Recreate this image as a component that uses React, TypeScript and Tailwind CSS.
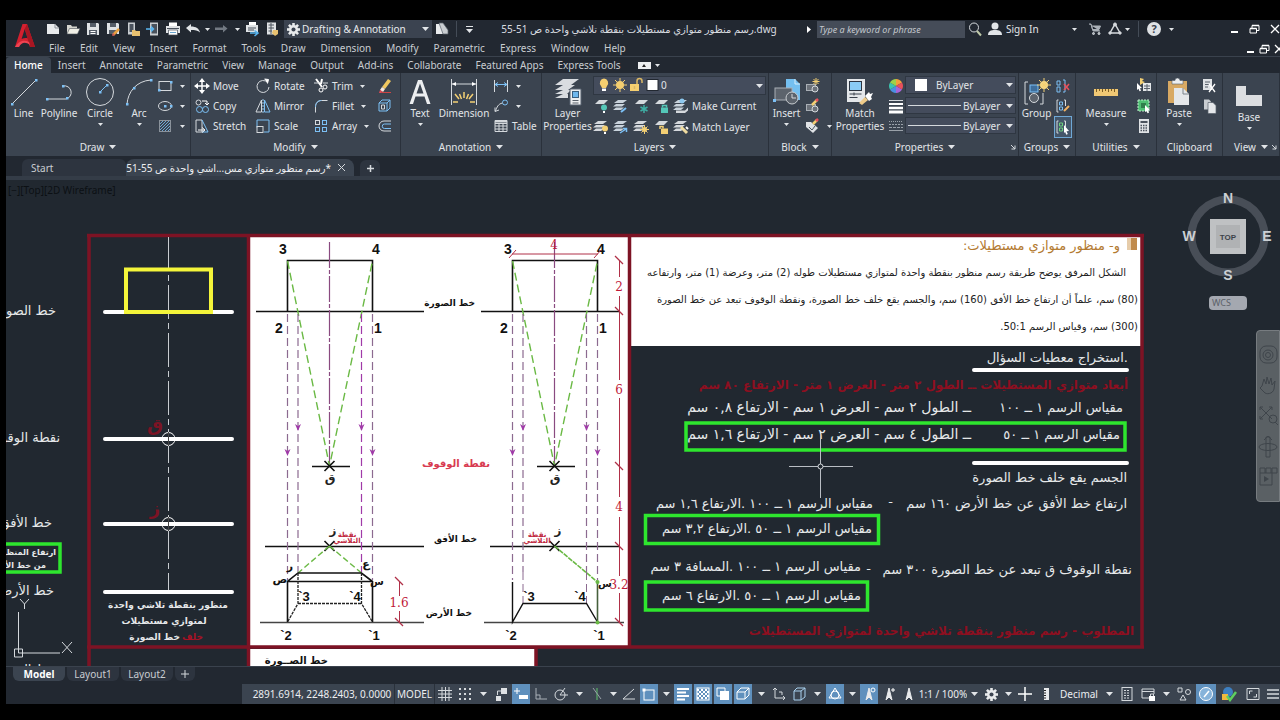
import type { ReactNode } from "react";

const menus = ["File", "Edit", "View", "Insert", "Format", "Tools", "Draw", "Dimension", "Modify", "Parametric", "Express", "Window", "Help"];
const ribbonTabs = ["Home", "Insert", "Annotate", "Parametric", "View", "Manage", "Output", "Add-ins", "Collaborate", "Featured Apps", "Express Tools"];

type IconProps = { w?: number; h?: number; children: ReactNode };

function Ico({ w = 16, h = 16, children }: IconProps) {
  return (
    <svg width={w} height={h} viewBox={`0 0 ${w} ${h}`} fill="none" stroke="#d5d9dd" strokeWidth="1" className="block shrink-0" aria-hidden="true">
      {children}
    </svg>
  );
}

function Caret({ big = false }: { big?: boolean }) {
  return (
    <svg width={big ? 7 : 5} height={big ? 4 : 3} viewBox="0 0 6 3" preserveAspectRatio="none" className="block shrink-0" aria-hidden="true">
      <path d="M0 0h6L3 3z" fill="#e2e5e8" />
    </svg>
  );
}

/* ---------- title bar icons ---------- */

const logo = (
  <svg width="22" height="26" viewBox="0 0 22 26" aria-hidden="true">
    <path d="M1 24 8.500 1h4.500L21 24h-5l-1.500-4.500c-3-1-6-.5-8.500 1L5 24z" fill="#d3202f" />
    <path d="M10.700 6 7.600 16c2-1 4-1.200 6.200-.7z" fill="#222831" />
    <path d="M13 1l8 23h-5L10.700 6z" fill="#a81622" />
    <path d="M1 24c3-5 8-8 14-5l1 3C11 18 7 20 5 24z" fill="#ef4351" />
  </svg>
);

const qatIcons: { name: string; icon: ReactNode }[] = [
  { name: "New", icon: <Ico><path d="M2 3h8l4 4v6H2z" fill="#e8eaec" stroke="none" /><path d="M10 3v4h4" stroke="#8b9198" /></Ico> },
  { name: "Open", icon: <Ico><path d="M2 13V4h4l1 1.500h5V8" fill="#d5d5cf" stroke="none" /><path d="M4.500 7.500H15L12.500 13H2z" fill="#f0efe6" stroke="#4b525b" strokeWidth=".6" /></Ico> },
  { name: "Save", icon: <Ico><path d="M2 2h11l1 1v11H2z" fill="#dfe2e5" stroke="none" /><path d="M5 2h6v4H5zM4 9h8v5H4z" fill="#555d68" stroke="none" /><path d="M5.500 10.500h5M5.500 12.500h5" stroke="#fff" /></Ico> },
  { name: "Save As", icon: <Ico><path d="M2 2h11l1 1v10H2z" fill="#dfe2e5" stroke="none" /><path d="M5 2h6v4H5zM4 9h8v4H4z" fill="#555d68" stroke="none" /><path d="M8 14l6-6" stroke="#e8a040" strokeWidth="2.500" /><path d="M7 15l1-3 2 2z" fill="#d0505a" stroke="none" /></Ico> },
  { name: "Open from mobile", icon: <Ico><path d="M3 1.500h7v12H3z" fill="#c9cdd1" stroke="none" /><path d="M4.500 3h4v8h-4z" fill="#4a525d" stroke="none" /><path d="M7 9h3l1 1h4v5H7z" fill="#e8c170" stroke="none" /></Ico> },
  { name: "Save to mobile", icon: <Ico><path d="M5 1.500h8v13H5z" fill="#c9cdd1" stroke="none" /><path d="M6.500 3H12v9.500H6.500z" fill="#4a525d" stroke="none" /><path d="M1 8h7M6 5.500 8.500 8 6 10.500" stroke="#5ab6f0" strokeWidth="1.500" /></Ico> },
  { name: "Plot", icon: <Ico><path d="M4 1.500h8V5H4z" fill="#fff" stroke="none" /><path d="M1 5h14v7H1z" fill="#dfe2e5" stroke="none" /><path d="M3.500 9h9v5h-9z" fill="#fff" stroke="#4a525d" strokeWidth=".7" /><path d="M2 7.500h12" stroke="#4a525d" /><path d="M5 11.500h6" stroke="#6aa5d0" /></Ico> },
  { name: "Undo", icon: <Ico><path d="M1 7l5-4v2.500c5 0 8 2 9 6C13 9.500 10 9 6 9v2.500z" fill="#e2e5e8" stroke="none" /></Ico> },
];

const redoIcon = <Ico w={14}><path d="M13.500 7.500 9 4v2.500H1V9h8v2.500z" fill="#727982" stroke="none" /></Ico>;
const batchPlot = <Ico><path d="M4 1h7v4H4z" fill="#fff" stroke="none" /><path d="M1 4h12v7H1z" fill="#dfe2e5" stroke="none" /><path d="M3 7h8M3 9h6" stroke="#4a525d" /><path d="M5 12h7M9.500 9.500 13 12l-3.500 3" stroke="#5ab6f0" strokeWidth="1.500" /></Ico>;
const sheetSet = <Ico><path d="M2 1.500h9v12H2z" fill="#dfe2e5" stroke="none" /><path d="M3.500 4H9M3.500 7H9M3.500 10H7M6 2v11" stroke="#4a525d" /><path d="M8 9h5v4l-3 2-3-3z" fill="#e8c170" stroke="none" /></Ico>;
const gear = (
  <svg width="13" height="13" viewBox="-8 -8 16 16" aria-hidden="true">
    <g fill="#e8eaec">
      <rect x="-1.600" y="-8" width="3.200" height="16" />
      <rect x="-8" y="-1.600" width="16" height="3.200" />
      <rect x="-1.600" y="-8" width="3.200" height="16" transform="rotate(45)" />
      <rect x="-1.600" y="-8" width="3.200" height="16" transform="rotate(-45)" />
      <circle r="5.600" />
    </g>
    <circle r="2.500" fill="#3b4350" />
  </svg>
);

const minimize = <Ico w={10} h={10}><path d="M2 8h7" stroke="#fff" strokeWidth="2" /></Ico>;
const restore = <Ico w={11} h={10}><path d="M1 4.500h6.500V9H1zM3 4V1.500h7V6.500H8" stroke="#fff" /><path d="M1 4.500h6.500M3 1.500h7" stroke="#fff" strokeWidth="1.500" /></Ico>;
const close = <Ico w={10} h={10}><path d="M1 1l8 8M9 1 1 9" stroke="#fff" strokeWidth="1.300" /></Ico>;

function TitleRow() {
  return (
    <div className="flex h-[18px] items-center">
      {qatIcons.map((q) => (
        <button key={q.name} aria-label={q.name} className="flex w-5 shrink-0 justify-center">{q.icon}</button>
      ))}
      <button aria-label="Undo list" className="flex w-2 justify-center"><Caret /></button>
      <button aria-label="Redo" className="flex w-5 justify-center">{redoIcon}</button>
      <button aria-label="Redo list" className="flex w-3 justify-center"><Caret /></button>
      <button aria-label="Batch plot" className="flex w-5 justify-center">{batchPlot}</button>
      <button aria-label="Sheet set manager" className="flex w-5 justify-center">{sheetSet}</button>
      <button className="ml-px flex h-[18px] w-[148px] shrink-0 items-center gap-[2px] bg-[#3b4350] px-[3px] text-[10px] text-[#e8eaec]">
        {gear}
        <span className="flex-1 whitespace-nowrap text-left">Drafting &amp; Annotation</span>
        <Caret big />
      </button>
      <button aria-label="Share" className="flex w-5 justify-center">
        <Ico><path d="M2 3h5l2 10H2z" fill="#e8eaec" stroke="none" /><path d="M5 2l4 0 5 7v4H9z" fill="#c9cdd1" stroke="#59616b" strokeWidth=".7" /></Ico>
      </button>
      <span className="mx-1 h-4 w-px bg-[#444c57]" />
      <button aria-label="Customize" className="flex w-4 flex-col items-center gap-[2px]">
        <span className="h-px w-[7px] bg-[#e2e5e8]" />
        <Caret big />
      </button>
      <h1 className="min-w-0 flex-1 truncate text-center text-[10px] text-[#d9dce0]">رسم منظور متوازي مستطيلات بنقطة تلاشي واحدة ص 51-55.dwg</h1>
      <span className="flex w-4 justify-center"><Ico w={4} h={7}><path d="M0 0l4 3.500L0 7z" fill="#fff" stroke="none" /></Ico></span>
      <input aria-label="Search" placeholder="Type a keyword or phrase" className="h-[17px] w-[148px] shrink-0 bg-[#454c58] px-[2px] text-[9px] italic placeholder:text-[#c3c7cc]" />
      <button aria-label="Find" className="flex w-5 justify-center">
        <Ico><circle cx="7" cy="6.500" r="4.500" /><path d="M10 10l4 4.500" stroke="#bfc9a8" strokeWidth="2" /></Ico>
      </button>
      <button className="flex w-[92px] shrink-0 items-center gap-1 pl-[3px] text-[10px] text-[#e2e5e8]">
        <Ico w={14} h={14}><circle cx="7" cy="4" r="3.500" fill="#e2e5e8" stroke="none" /><path d="M0 13c0-4 3-5 7-5s7 1 7 5z" fill="#e2e5e8" stroke="none" /></Ico>
        <span className="flex-1 text-left">Sign In</span>
        <Caret />
      </button>
      <button aria-label="Autodesk App Store" className="ml-2 flex w-5 justify-center">
        <Ico w={14} h={14}><path d="M1 2h2l2 7h7M3.500 4h9L11 7.500H4.500z" fill="#aab0b7" stroke="#aab0b7" /><circle cx="5.500" cy="11.500" r="1" fill="#aab0b7" /><circle cx="11" cy="11.500" r="1" fill="#aab0b7" /></Ico>
      </button>
      <button aria-label="Autodesk online" className="flex w-5 items-center justify-center">
        <Ico w={14} h={14}><path d="M7 2l5 9H2z" strokeWidth="1.500" /><circle cx="7" cy="2.500" r="1.500" fill="#d5d9dd" /><circle cx="2" cy="11" r="1.200" fill="#d5d9dd" /><circle cx="12" cy="11" r="1.200" fill="#d5d9dd" /></Ico>
      </button>
      <Caret />
      <span className="mx-2 h-4 w-px bg-[#444c57]" />
      <button className="flex h-[14px] w-[14px] shrink-0 items-center justify-center rounded-full bg-[#dfe2e5] text-[11px] font-bold text-[#39414c]">?</button>
      <button aria-label="Help menu" className="flex w-5 justify-center"><Caret /></button>
      <div className="flex w-[99px] shrink-0 justify-end gap-[10px]">
        <button aria-label="Minimize">{minimize}</button>
        <button aria-label="Restore">{restore}</button>
        <button aria-label="Close">{close}</button>
      </div>
    </div>
  );
}

/* ---------- ribbon ---------- */

function Panel({ title, className, arrow = true, launcher = false, children }: { title: string; className: string; arrow?: boolean; launcher?: boolean; children: ReactNode }) {
  return (
    <section className={`flex shrink-0 flex-col border-r border-[#2a313b] ${className}`}>
      <div className="flex h-[65px] pt-[3px]">{children}</div>
      <div className="relative flex h-[18px] items-center justify-center gap-[5px] text-[10px] text-[#e2e5e8]">
        {title}
        {arrow && <Caret big />}
        {launcher && (
          <span className="absolute right-[2px]"><Ico w={6} h={6}><path d="M1 1l4 4M5 1.500V5H1.500" /></Ico></span>
        )}
      </div>
    </section>
  );
}

function Big({ label, icon, className, arrow = false }: { label: string; icon: ReactNode; className: string; arrow?: boolean }) {
  return (
    <button className={`flex shrink-0 flex-col items-center text-[10px] leading-[13px] text-[#e2e5e8] ${className}`}>
      <span className="flex h-[31px] items-center">{icon}</span>
      <span className="whitespace-pre text-center">{label}</span>
      {arrow && <span className="mt-[3px]"><Caret /></span>}
    </button>
  );
}

function Small({ label, icon, arrow = false }: { label?: string; icon: ReactNode; arrow?: boolean }) {
  return (
    <button className="flex h-5 items-center gap-[3px] whitespace-nowrap text-[10px] text-[#e2e5e8]">
      {icon}
      {label && <span>{label}</span>}
      {arrow && <span className="ml-1"><Caret /></span>}
    </button>
  );
}

const dot = (x: number, y: number) => <rect x={x - 1} y={y - 1} width="2.500" height="2.500" fill="#7cc0f5" stroke="none" />;

const iLine = <Ico w={28} h={28}><path d="M2 26 26 2" />{dot(2, 26)}{dot(26, 2)}</Ico>;
const iPolyline = <Ico w={28} h={28}><path d="M1 21h20a6.500 6.500 0 0 0-3-13" />{dot(2, 21)}{dot(18, 8)}{dot(22, 20)}</Ico>;
const iCircle = <Ico w={30} h={30}><circle cx="15" cy="15" r="13.500" /><path d="M15 15l7-7" stroke="#7cc0f5" />{dot(15, 15)}{dot(22, 8)}</Ico>;
const iArc = <Ico w={28} h={28}><path d="M2 26C3 14 11 3 26 2" />{dot(2, 26)}{dot(9, 10)}{dot(26, 2)}</Ico>;
const iRect = <Ico><rect x="2" y="3.500" width="12" height="9" />{dot(2, 12)}{dot(14, 4)}</Ico>;
const iEllipse = <Ico><ellipse cx="8" cy="8" rx="6.500" ry="4.500" />{dot(8, 8)}{dot(14, 8)}</Ico>;
const iHatch = <Ico><rect x="2.500" y="2.500" width="11" height="11" stroke="#8a929b" /><path d="M3 6l3-3M3 9l6-6M3 12l9-9M5 13l8-8M8 13l5-5M11 13l2-2" stroke="#7cc0f5" strokeWidth=".8" /></Ico>;

const iMove = <Ico><path d="M8 2v12M2 8h12" stroke="#fff" strokeWidth="1.500" /><path d="M8 0l3 4H5zM8 16l3-4H5zM0 8l4-3v6zM16 8l-4-3v6z" fill="#fff" stroke="none" /></Ico>;
const iCopy = <Ico><circle cx="4.500" cy="4.500" r="2.500" /><circle cx="5.500" cy="11.500" r="3" stroke="#7cc0f5" /><circle cx="11.500" cy="11.500" r="3" stroke="#7cc0f5" /><path d="M8 3h5v4M11 5l2 2 2-2" stroke="#fff" /></Ico>;
const iStretch = <Ico><path d="M2 2h6v12H2z" /><path d="M8 2l6 12H8" stroke="#7cc0f5" /><path d="M4 12h6M8 9.500l3 2.500-3 2.500" stroke="#fff" /></Ico>;
const iRotate = <Ico><path d="M12.500 4.500A6 6 0 1 0 14 9" /><path d="M9.500 1l4 .5-1 4" stroke="#fff" fill="#fff" /></Ico>;
const iMirror = <Ico><path d="M6.500 2v12H1z" /><path d="M9.500 2v12H15z" stroke="#7cc0f5" /><path d="M8 1v14" strokeDasharray="2 1" stroke="#9fc9ea" /></Ico>;
const iScale = <Ico><path d="M2 9.500V2h12v12H9" stroke="#7cc0f5" /><rect x="2" y="8.500" width="6" height="6" /></Ico>;
const iTrim = <Ico><path d="M3 1l6 8M9 1l-1 5" stroke="#fff" strokeWidth="2" /><circle cx="8" cy="12" r="2" stroke="#fff" /><circle cx="12" cy="9" r="2" stroke="#fff" /><path d="M1 5h5M10 5h5" /></Ico>;
const iFillet = <Ico><path d="M2.500 14.500V9c0-4 2.500-6.500 6-6.500h6" /><path d="M2.500 9c0-4 2.500-6.500 6-6.500" stroke="#7cc0f5" /></Ico>;
const iArray = <Ico><rect x="2.500" y="2.500" width="4" height="4" /><rect x="9.500" y="2.500" width="4" height="4" stroke="#7cc0f5" /><rect x="2.500" y="9.500" width="4" height="4" stroke="#7cc0f5" /><rect x="9.500" y="9.500" width="4" height="4" stroke="#7cc0f5" /></Ico>;
const iErase = <Ico><path d="M5 9l6-8 3 2-6 8z" fill="#f0c860" stroke="none" /><path d="M5 9l3 2-2 3-3-2z" fill="#f5e9e0" stroke="none" /><path d="M3 12l3 2-2 1H2z" fill="#e04a55" stroke="none" /><path d="M5 14.500h9" stroke="#c44" /></Ico>;
const iExplode = <Ico><path d="M2 5h8v8H2zM2 5l3-3h8v8l-3 3M10 5l3-3" stroke="#7cc0f5" /><path d="M4.500 7h3v4h-3z" /></Ico>;
const iOffset = <Ico><path d="M14 3H7a5 5 0 0 0 0 10h7" /><path d="M14 6H7.500a2.200 2.200 0 0 0 0 4.500H14" stroke="#7cc0f5" /></Ico>;

const iText = <Ico w={24} h={28}><path d="M10 2h4l8.500 24H19l-2.500-7.500h-9L5 26H1.500zM12 5.500 8.500 15.500h7z" fill="#eceef0" stroke="none" /></Ico>;
const iDimension = <Ico w={28} h={28}><path d="M1.500 1v26M26.500 1v26M2 6h24" /><path d="M2 6l4-2v4zM26 6l-4-2v4z" fill="#fff" stroke="none" /><path d="M14 20v-6M9 21l-4-5M19 21l4-5M8 24H3M20 24h5M11.500 21l-2-5M16.500 21l2-5" stroke="#f3cf73" strokeWidth="1.500" /></Ico>;
const iLinear = <Ico><path d="M1.500 2v12M14.500 2v12" /><path d="M2 6.500h12M5 4.500l-3 2 3 2M11 4.500l3 2-3 2" stroke="#7cc0f5" /></Ico>;
const iLeader = <Ico><circle cx="12" cy="4.500" r="2.500" stroke="#7cc0f5" /><path d="M9.500 5C5 6 4 9 2.500 13M2 9.500v4l4-1.500" /></Ico>;
const iTable = <Ico><path d="M2 2.500h12v11H2zM2 5.500h12M2 8h12M2 11h12M6 5v9M10 5v9" /><path d="M2 3.500h12" strokeWidth="2" /></Ico>;

const sheets = (c: string) => (
  <>
    <path d="M5 2h9l-4 3H1z" fill={c} stroke="none" />
    <path d="M3 6h9l-3 2.500H0zM3 9.500h8L8 12H0z" fill={c} stroke="none" />
  </>
);
const iLayerProps = (
  <Ico w={28} h={30}>
    <path d="M9 2h16l-8 6H1zM9 8h12l-7 5H1zM9 13h8l-4 4H1zM9 17h5v4H1z" fill="#d9dce0" stroke="none" />
    <path d="M16 12h11v16H16z" fill="#eceef0" stroke="#596270" />
    <rect x="18.500" y="14.500" width="6" height="6" fill="#6fb8ee" stroke="#385f80" />
    <path d="M18.500 23.500h6M18.500 26h6" stroke="#59616b" />
  </Ico>
);
const layerRow1: [string, ReactNode][] = [
  ["Off", <Ico key="a"><path d="M6 2h9l-4 4H2z" fill="#d5d9dd" stroke="none" /><circle cx="11" cy="9.500" r="3" fill="#54c7b8" stroke="none" /><path d="M10 13h2v2h-2z" fill="#fff" stroke="none" /></Ico>],
  ["Isolate", <Ico key="b">{sheets("#c9d3dc")}<path d="M8 14l5-4" stroke="#7cc0f5" strokeWidth="2" /></Ico>],
  ["Freeze", <Ico key="c"><path d="M6 2h9l-4 4H2z" fill="#d5d9dd" stroke="none" /><path d="M11 7v8M7.500 9l7 4M14.500 9l-7 4" stroke="#3fb0a5" strokeWidth="1.500" /></Ico>],
  ["Lock", <Ico key="d"><path d="M6 2h9l-4 4H2z" fill="#d5d9dd" stroke="none" /><rect x="8" y="9.500" width="7" height="5.500" fill="#54c7b8" stroke="none" /><path d="M9.500 9.500V7.500h4v2" stroke="#54c7b8" strokeWidth="1.500" /></Ico>],
];
const layerRow2: [string, ReactNode][] = [
  ["Turn all on", <Ico key="a">{sheets("#d5d9dd")}<circle cx="12" cy="9.500" r="3" fill="#f3cf73" stroke="none" /><path d="M11 13h2v2h-2z" fill="#fff" stroke="none" /></Ico>],
  ["Unisolate", <Ico key="b">{sheets("#c9d3dc")}<path d="M7 14l6-4M10 9.500h3.500V13" stroke="#7cc0f5" strokeWidth="1.500" /></Ico>],
  ["Thaw all", <Ico key="c">{sheets("#d5d9dd")}<circle cx="11.500" cy="10.500" r="2.500" fill="#f3cf73" stroke="none" /><path d="M11.500 6v9M7 10.500h9M8.500 7.500l6 6M14.500 7.500l-6 6" stroke="#f3cf73" /></Ico>],
  ["Unlock", <Ico key="d"><path d="M6 2h9l-4 4H2z" fill="#d5d9dd" stroke="none" /><rect x="8" y="9.500" width="7" height="5.500" fill="#f3cf73" stroke="none" /><path d="M7 10V7.500h3v2" stroke="#f3cf73" strokeWidth="1.500" /></Ico>],
];
const iMakeCurrent = <Ico>{sheets("#c9d3dc")}<path d="M3 12.500h9l3-3v3l-3 2.500H3z" fill="#d5d9dd" stroke="none" /><circle cx="9" cy="3" r="2.500" fill="#8cc7ee" stroke="none" /></Ico>;
const iMatchLayer = <Ico>{sheets("#d5d9dd")}<path d="M8 8l6 6" stroke="#f0dca0" strokeWidth="3" /><path d="M13 8l2 2" stroke="#fff" strokeWidth="2" /></Ico>;

const iInsert = (
  <Ico w={28} h={28}>
    <path d="M13 1h9l5 5v16H13z" fill="#74bff0" stroke="none" />
    <path d="M22 1v5h5" stroke="#d6ecfa" />
    <rect x="2" y="10" width="17" height="12" fill="#5c636c" stroke="#a9afb6" />
    <circle cx="19" cy="20" r="6" fill="#5c636c" stroke="#c9cdd1" />
    <path d="M19 16v4h4" /><rect x="0" y="21" width="3" height="3" fill="#7cc0f5" stroke="none" />
  </Ico>
);
const iCreateBlock = <Ico><rect x="2.500" y="6.500" width="9" height="6" fill="#6b7179" stroke="#a9afb6" /><circle cx="11" cy="11" r="3" fill="#6b7179" /><path d="M12 0v7M8.500 3.500h7M9.500 1l5 5M14.500 1l-5 5" stroke="#f3cf73" /></Ico>;
const iEditBlock = <Ico><rect x="2.500" y="6.500" width="9" height="6" fill="#6b7179" stroke="#a9afb6" /><circle cx="11" cy="11" r="3" fill="#6b7179" /><path d="M8 7l5-5" stroke="#f3cf73" strokeWidth="2.500" /><path d="M12 3l2-2" stroke="#e8505b" strokeWidth="2.500" /></Ico>;
const iAttrib = <Ico><path d="M2 4h5l7 6-5 5-7-6z" fill="#dfe2e5" stroke="none" /><path d="M5 9l3 3 3-4" stroke="#4a525d" /><path d="M9 6l4-4" stroke="#f3cf73" strokeWidth="2.500" /><path d="M12 3l2-2" stroke="#e8505b" strokeWidth="2.500" /></Ico>;

const iMatchProps = (
  <Ico w={28} h={28}>
    <rect x="1" y="1" width="18" height="23" fill="#e4e7ea" stroke="none" />
    <rect x="3.500" y="3.500" width="12" height="9" fill="#8accf5" stroke="#2c3541" />
    <path d="M3.500 16h12M3.500 19.500h8M8 14.500v3" stroke="#39414c" />
    <path d="M13 25l6-6 3 3-6 5z" fill="#edcb8a" stroke="none" />
    <path d="M19 18l4-4 1 2 3-1-2 4 1 2-3 2z" fill="#fff" stroke="none" />
  </Ico>
);
const iWheel = (
  <Ico>
    <g stroke="none">
      <path d="M8 8V1a7 7 0 0 1 6 3.500z" fill="#f2a03c" /><path d="M8 8l6-3.500a7 7 0 0 1 0 7z" fill="#e8505b" />
      <path d="M8 8l6 3.500A7 7 0 0 1 8 15z" fill="#a864d8" /><path d="M8 8v7a7 7 0 0 1-6-3.500z" fill="#4a90e2" />
      <path d="M8 8l-6 3.500a7 7 0 0 1 0-7z" fill="#3cc4b0" /><path d="M8 8 2 4.500A7 7 0 0 1 8 1z" fill="#9cd24a" />
    </g>
  </Ico>
);
const iWeights = <Ico><path d="M1 2.500h14" /><path d="M1 6h14" strokeWidth="2" stroke="#fff" /><path d="M1 10h14" strokeWidth="2.500" stroke="#fff" /><path d="M1 14h14" strokeWidth="3" stroke="#fff" /></Ico>;
const iLinetype = <Ico><path d="M1 3.500h14" strokeDasharray="1 1" stroke="#9aa1a9" /><path d="M1 6.500h14" strokeDasharray="2 1" stroke="#9aa1a9" /><path d="M1 9.500h14" strokeDasharray="3 1" stroke="#9aa1a9" /><path d="M1 12.500h14" stroke="#9aa1a9" /></Ico>;

const iGroup = (
  <Ico w={28} h={28}>
    <path d="M5 4H2v22h3M17 26h3V15" />
    <rect x="7" y="7" width="8" height="7" fill="#3f6f9c" stroke="#7cc0f5" />
    <circle cx="11" cy="20" r="4.500" fill="#5c636c" />
    <circle cx="21" cy="7" r="4" fill="#f8da86" stroke="none" />
    <path d="M21 0v14M14 7h14M16 2l10 10M26 2 16 12" stroke="#f3cf73" />
  </Ico>
);
const iUngroup = <Ico><path d="M2 3h3v4H2zM2 9h3v5H2zM8 2h2v12H8" stroke="#7cc0f5" /><path d="M9 6l5 6M14 6l-5 6" stroke="#e8505b" strokeWidth="1.500" /></Ico>;
const iGroupEdit = <Ico><path d="M3.500 2H2v12h1.500M9 2h1.500v6" /><path d="M4.500 4h3v3h-3zM4.500 9h3v3h-3z" stroke="#7cc0f5" /><path d="M9 13l5-5" stroke="#f0b060" strokeWidth="2" /></Ico>;
const iGroupSel = <Ico><path d="M3.500 2H2v12h1.500M9 2h1.500v6" /><path d="M4.500 4h3v3h-3zM4.500 9h3v3h-3z" stroke="#6ccf7e" /><path d="M9 6l5 6-2.500.3 1.300 2.700-1.500.7-1.200-2.800L9 14z" fill="#fff" stroke="none" /></Ico>;

const iMeasure = <Ico w={26} h={14}><rect x="1" y="4" width="24" height="7" fill="#f0c874" stroke="none" /><path d="M3.500 4v3M6.500 4v2M9.500 4v3M12.500 4v2M15.500 4v3M18.500 4v2M21.500 4v3" stroke="#7b5c22" /></Ico>;
const iQuickSel = <Ico><rect x="7" y="5" width="8" height="8" fill="#e4e7ea" stroke="none" /><path d="M8 8h6M8 10.500h6M11 6v7" stroke="#59616b" /><path d="M4 0l4 1-2 2 3 1-5 3z" fill="#f3cf73" stroke="none" /><path d="M1 5l5 5-2 .3 1 2.500-1.500.5-1-2.500L1 12z" fill="#fff" stroke="none" /></Ico>;
const iSelectAll = <Ico><rect x="2" y="2" width="11" height="11" fill="#4fbf73" stroke="#bfe9cb" strokeDasharray="2 1" /><rect x="5" y="5" width="5" height="5" fill="#2f7f4b" stroke="none" /><path d="M9 7l5 5-2 .3 1 2.500-1.500.5-1-2.500L9 14z" fill="#fff" stroke="none" /></Ico>;
const iCalc = <Ico><rect x="3" y="1" width="10" height="14" fill="#dfe2e5" stroke="none" /><path d="M4.500 3h7v2h-7z" fill="#4a525d" stroke="none" /><path d="M4.500 7.500h7M4.500 10h7M4.500 12.500h7" stroke="#4a525d" strokeDasharray="1.500 1" strokeWidth="1.500" /></Ico>;

const iPaste = (
  <Ico w={26} h={28}>
    <rect x="2" y="3" width="19" height="22" fill="#d8a963" stroke="none" />
    <path d="M6 6V2.500h3a2.500 2.500 0 0 1 5 0h3V6z" fill="#eceef0" stroke="#59616b" strokeWidth=".6" />
    <path d="M8 10h9l6 6v11H8z" fill="#e4e7ea" stroke="none" />
    <path d="M17 10v6h6" stroke="#7d848c" />
  </Ico>
);
const iCut = <Ico><path d="M2 1h9v11H2z" fill="#dfe2e5" stroke="none" /><path d="M4 4h5M4 6.500h5M4 9h3" stroke="#59616b" /><path d="M8 6l6 8M14 6l-6 8" stroke="#fff" strokeWidth="1.300" /></Ico>;
const iCopyClip = <Ico><path d="M3 1.500h5l2 2v8H3z" fill="#c9cdd1" stroke="none" /><path d="M7 4.500h5l3 3v8H7z" fill="#e4e7ea" stroke="#59616b" strokeWidth=".7" /></Ico>;
const iBase = <Ico w={28} h={22}><path d="M1 1h10v9h16v11H1z" fill="#dcdee1" stroke="none" /></Ico>;

function LineSelect({ label }: { label: string }) {
  return (
    <div className="relative h-[17px] border border-[#2f3742] bg-[#444c5c]">
      <span className="pointer-events-none absolute left-[2px] top-[7px] h-px w-[53px] bg-[#d5d9dd]" />
      <select aria-label={label} className="block h-full w-full appearance-none pl-[57px] text-[10px] leading-[14px] text-[#e2e5e8]">
        <option>ByLayer</option>
      </select>
      <span className="pointer-events-none absolute right-[2px] top-[6px]"><Caret big /></span>
    </div>
  );
}

function Ribbon() {
  return (
    <div className="flex h-[83px] bg-[#3b4450]">
      <Panel title="Draw" className="w-[185px]">
        <Big label="Line" icon={iLine} className="w-[35px]" />
        <Big label="Polyline" icon={iPolyline} className="w-[36px]" />
        <Big label="Circle" icon={iCircle} className="w-[46px]" arrow />
        <Big label="Arc" icon={iArc} className="w-8" arrow />
        <div className="pl-[2px]">
          <Small icon={iRect} arrow />
          <Small icon={iEllipse} arrow />
          <Small icon={iHatch} arrow />
        </div>
      </Panel>
      <Panel title="Modify" className="w-[210px]">
        <div className="w-[61px] pl-[3px]">
          <Small label="Move" icon={iMove} />
          <Small label="Copy" icon={iCopy} />
          <Small label="Stretch" icon={iStretch} />
        </div>
        <div className="w-[58px] pl-[3px]">
          <Small label="Rotate" icon={iRotate} />
          <Small label="Mirror" icon={iMirror} />
          <Small label="Scale" icon={iScale} />
        </div>
        <div className="w-[64px] pl-[3px]">
          <Small label="Trim" icon={iTrim} arrow />
          <Small label="Fillet" icon={iFillet} arrow />
          <Small label="Array" icon={iArray} arrow />
        </div>
        <div className="pl-[3px]">
          <Small icon={iErase} />
          <Small icon={iExplode} />
          <Small icon={iOffset} />
        </div>
      </Panel>
      <Panel title="Annotation" className="w-[141px]">
        <Big label="Text" icon={iText} className="w-[38px]" arrow />
        <Big label="Dimension" icon={iDimension} className="w-[50px]" />
        <div className="pl-1">
          <Small icon={iLinear} arrow />
          <Small icon={iLeader} arrow />
          <Small label="Table" icon={iTable} />
        </div>
      </Panel>
      <Panel title="Layers" className="w-[227px]">
        <Big label={"Layer\nProperties"} icon={iLayerProps} className="w-[51px]" />
        <div className="flex-1 pr-[2px]">
          <div className="relative h-[19px] border border-[#2f3742] bg-[#444c5c]">
            <div className="pointer-events-none absolute left-[2px] top-0 flex">
              <Ico><path d="M8 1.500a4.500 4.500 0 0 1 3 7.500l-1 2H6L5 9a4.500 4.500 0 0 1 3-7.500z" fill="#f5cf70" stroke="none" /><path d="M6 11.500h4v2.500H6z" fill="#fff" stroke="none" /></Ico>
              <Ico><circle cx="8" cy="8" r="4" fill="#f5cf70" stroke="none" /><path d="M8 1v14M1 8h14M3 3l10 10M13 3 3 13" stroke="#f5cf70" /></Ico>
              <Ico><rect x="2" y="7" width="9" height="7" fill="#f5cf70" stroke="none" /><path d="M9 7V4a2.500 2.500 0 0 1 5 0v2M6.500 9v3" stroke="#d9b765" strokeWidth="1.500" /></Ico>
              <Ico><rect x="3" y="2.500" width="11" height="11" fill="#fff" stroke="#222831" /></Ico>
            </div>
            <select aria-label="Layer" className="block h-full w-full appearance-none pl-[67px] text-[10px] leading-[15px] text-[#e2e5e8]">
              <option>0</option>
            </select>
            <span className="pointer-events-none absolute right-[2px] top-[7px]"><Caret big /></span>
          </div>
          <div className="flex h-[22px] items-center gap-1">
            {layerRow1.map(([name, icon]) => <button key={name} aria-label={name}>{icon}</button>)}
            <Small label="Make Current" icon={iMakeCurrent} />
          </div>
          <div className="flex h-5 items-center gap-1">
            {layerRow2.map(([name, icon]) => <button key={name} aria-label={name}>{icon}</button>)}
            <Small label="Match Layer" icon={iMatchLayer} />
          </div>
        </div>
      </Panel>
      <Panel title="Block" className="w-[63px]">
        <Big label="Insert" icon={iInsert} className="w-[35px]" arrow />
        <div>
          <Small icon={iCreateBlock} />
          <Small icon={iEditBlock} />
          <Small icon={iAttrib} arrow />
        </div>
      </Panel>
      <Panel title="Properties" className="w-[187px]" launcher>
        <Big label={"Match\nProperties"} icon={iMatchProps} className="w-[56px]" />
        <div className="w-[17px]">
          <Small icon={iWheel} />
          <Small icon={iWeights} />
          <Small icon={iLinetype} />
        </div>
        <div className="flex flex-1 flex-col gap-[3px] pr-[2px]">
          <div className="relative h-[18px] border border-[#2f3742] bg-[#444c5c]">
            <span className="pointer-events-none absolute left-[9px] top-[2px] h-3 w-3 bg-white" />
            <select aria-label="Object color" className="block h-full w-full appearance-none pl-[30px] text-[10px] leading-[15px] text-[#e2e5e8]">
              <option>ByLayer</option>
            </select>
            <span className="pointer-events-none absolute right-[2px] top-[6px]"><Caret big /></span>
          </div>
          <LineSelect label="Lineweight" />
          <LineSelect label="Linetype" />
        </div>
      </Panel>
      <Panel title="Groups" className="w-[57px]">
        <Big label="Group" icon={iGroup} className="w-[35px]" />
        <div className="flex flex-col items-center">
          <Small icon={iUngroup} />
          <Small icon={iGroupEdit} />
          <span className="border border-[#6fa8d6] bg-[#44566a]"><Small icon={iGroupSel} /></span>
        </div>
      </Panel>
      <Panel title="Utilities" className="w-[81px]">
        <Big label="Measure" icon={iMeasure} className="w-[60px]" arrow />
        <div>
          <Small icon={iQuickSel} />
          <Small icon={iSelectAll} />
          <Small icon={iCalc} />
        </div>
      </Panel>
      <Panel title="Clipboard" className="w-[66px]" arrow={false}>
        <Big label="Paste" icon={iPaste} className="w-11" arrow />
        <div>
          <Small icon={iCut} />
          <Small icon={iCopyClip} />
        </div>
      </Panel>
      <Panel title="View" className="flex-1" launcher>
        <div className="flex pt-1">
          <Big label="Base" icon={iBase} className="w-[52px]" arrow />
        </div>
      </Panel>
    </div>
  );
}

/* ---------- model space ---------- */

type LabelProps = { x: number; y: number; size?: number; fill?: string; weight?: number; anchor?: "start" | "middle" | "end"; family?: string; children: ReactNode };

// Right-to-left label; x is the right edge unless anchored in the middle
function Ar({ x, y, size = 13, fill = "#e6e8ea", weight = 400, anchor = "start", children }: LabelProps) {
  return (
    <text x={x} y={y} direction="rtl" textAnchor={anchor} fontSize={size} fontWeight={weight} fill={fill} fontFamily='"DejaVu Sans", sans-serif' xmlSpace="preserve">
      {children}
    </text>
  );
}

function Num({ x, y, size = 14, fill = "#111", weight = 700, family = '"Liberation Sans Narrow", "Liberation Sans", sans-serif', children }: LabelProps) {
  return (
    <text x={x} y={y} textAnchor="middle" fontSize={size} fontWeight={weight} fill={fill} fontFamily={family}>
      {children}
    </text>
  );
}

const dimFont = '"DejaVu Serif", "Liberation Serif", serif';

function Cross({ x, y }: { x: number; y: number }) {
  return <path d={`M${x - 5} ${y - 5}l10 10M${x + 5} ${y - 5}l-10 10`} stroke="#111" strokeWidth="1.600" />;
}

function Tick({ x, y }: { x: number; y: number }) {
  return <path d={`M${x - 4} ${y - 4}l8 8`} stroke="#b03048" strokeWidth="1.200" />;
}

// One plan with its construction lines; dx moves it along the sheet
function Plan({ dx, complete = false }: { dx: number; complete?: boolean }) {
  return (
    <g transform={`translate(${dx} 0)`} fill="none">
      <path d="M287.500 311V260.500H372.500V311" stroke="#111" strokeWidth="1.600" />
      <path d="M329.500 242V466" stroke="#8a4a80" strokeWidth="1.200" strokeDasharray="26 2 4 2" />
      <path d="M287.500 261 329.500 466 372.500 261" stroke="#6ab944" strokeWidth="1.400" strokeDasharray="8 4" />
      <path d="M287.500 314V580M298 314V572M372.500 314V580" stroke="#8c6a90" strokeWidth="1.200" strokeDasharray="8 4" />
      <path d="M361.500 314V572" stroke={complete ? "#a03aa8" : "#8c6a90"} strokeWidth="1.200" strokeDasharray="8 4" />
      <g fill="#a03aa8">
        <path d="M295 424l3 7 3-7-3 2zM358.500 424l3 7 3-7-3 2zM284.500 449l3 7 3-7-3 2zM369.500 449l3 7 3-7-3 2z" />
      </g>
      <path d="M312 466.500H350" stroke="#111" strokeWidth="1.400" />
      <Cross x={329.500} y={466} />
      <Cross x={329.500} y={546} />
      <Num x={283} y={254}>3</Num>
      <Num x={376} y={254}>4</Num>
      <Num x={279} y={333}>2</Num>
      <Num x={378} y={333}>1</Num>
      <Ar x={330} y={482} anchor="middle" size={12} weight={700} fill="#222">ق</Ar>
      <Ar x={333} y={534} anchor="middle" size={12} weight={700} fill="#222">ز</Ar>
      <Num x={304} y={601} size={13}>`3</Num>
      <Num x={355} y={601} size={13}>`4</Num>
      <Num x={286} y={640} size={13}>`2</Num>
      <Num x={374} y={640} size={13}>`1</Num>
      {complete ? (
        <>
          <path d="M329.500 546 298 573M329.500 546l32 27" stroke="#6ab944" strokeWidth="1.400" strokeDasharray="6 3" />
          <path d="M287.500 622V581.500L298 573H361.500l11 8.500V622M287.500 581.500h85" stroke="#111" strokeWidth="1.600" />
          <path d="M298 573v30.500L287.500 622M361.500 573v30.500L372.500 622M298 603.500h63.500" stroke="#222" strokeWidth="1.300" strokeDasharray="3 1" />
        </>
      ) : (
        <>
          <path d="M329.500 546 372.500 582" stroke="#6ab944" strokeWidth="1.600" strokeDasharray="5 1" />
          <path d="M298 572v31M361.500 572v31" stroke="#8c6a90" strokeDasharray="8 4" />
          <path d="M287.500 582v40L298 603.500h63.500L372.500 622" stroke="#111" strokeWidth="1.400" />
          <path d="M372.500 582v40" stroke="#46603c" strokeWidth="1.600" />
          <circle cx="372.500" cy="582" r="2" fill="#6ab944" />
          <circle cx="372.500" cy="622.500" r="2" fill="#6ab944" />
        </>
      )}
    </g>
  );
}

function Drawing() {
  return (
    <svg className="block h-full w-full" role="img" aria-label="Model space">
      <g transform="translate(-6 -180)">
        <text x="8" y="194" fontSize="10" fill="#0c1014">[−][Top][2D Wireframe]</text>

        {/* sheet frames */}
        <rect x="250" y="237" width="378" height="409" fill="#fff" />
        <rect x="631" y="237" width="510" height="109" fill="#fff" />
        <rect x="250" y="649" width="285" height="20" fill="#fff" />
        <path d="M87 235.500H1144M89 235V670M248.500 235V670M629.500 235V648M1142 235V648M87 647H1144M536 647V670" stroke="#7d1324" strokeWidth="3.500" fill="none" />

        {/* elevation column */}
        <path d="M168.500 237V591" stroke="#c9cdd1" strokeDasharray="34 4 6 4" />
        <path d="M105 312H232M105 439H232M105 524H232M105 592H232" stroke="#fff" strokeWidth="4" strokeLinecap="round" />
        <rect x="126" y="269.500" width="85" height="42.500" fill="none" stroke="#f4f53a" strokeWidth="4" />
        <circle cx="168.500" cy="439" r="6.500" fill="none" stroke="#fff" />
        <circle cx="168.500" cy="524" r="6.500" fill="none" stroke="#fff" />
        <path d="M168.500 432v14M168.500 517v14" stroke="#444" />
        <Ar x={155} y={431} anchor="middle" size={18} weight={700} fill="#7d1324">ق</Ar>
        <Ar x={155} y={515} anchor="middle" size={18} weight={700} fill="#7d1324">ز</Ar>
        <Ar x={56} y={315}>خط الصورة</Ar>
        <Ar x={60} y={442}>نقطة الوقوف</Ar>
        <Ar x={52} y={527}>خط الأفق</Ar>
        <rect x="-20" y="544" width="80" height="28" fill="none" stroke="#2ee62e" strokeWidth="3.500" />
        <Ar x={56} y={555} size={8} weight={700}>ارتفاع المنظور</Ar>
        <Ar x={46} y={568} size={8} weight={700}>من خط الأرض</Ar>
        <Ar x={54} y={595}>خط الأرض</Ar>
        <Ar x={56} y={674}>خط الصورة</Ar>
        <Ar x={168} y={608} anchor="middle" size={9} weight={700}>منظور بنقطة تلاشي واحدة</Ar>
        <Ar x={164} y={624} anchor="middle" size={9} weight={700}>لمتوازي مستطيلات</Ar>
        <Ar x={180} y={640} size={9} weight={700}>خط الصورة</Ar>
        <Ar x={203} y={640} size={9} weight={700} fill="#a81226">خلف</Ar>

        {/* UCS icon */}
        <path d="M18.500 612V653H60M14.500 649h8v8h-8zM62 642l10 11M72 642 62 653M20 599l4.500 5 4.500-5M24.500 604v5" stroke="#d5d9dd" fill="none" />

        {/* plans */}
        <path d="M256 311.500H424M481 311.500H620" stroke="#111" strokeWidth="1.500" />
        <path d="M265 546.500H424M490 546.500H620" stroke="#111" strokeWidth="1.500" />
        <path d="M260 622.500H424M484 622.500H624" stroke="#444" strokeWidth="1.500" />
        <Plan dx={0} complete />
        <Plan dx={225} />
        <Ar x={475} y={306} size={9} weight={700} fill="#111">خط الصورة</Ar>
        <Ar x={477} y={542} size={9} weight={700} fill="#111">خط الأفق</Ar>
        <Ar x={472} y={616} size={9} weight={700} fill="#111">خط الأرض</Ar>
        <Ar x={490} y={467} size={10} weight={700} fill="#d83a50">نقطة الوقوف</Ar>
        <Ar x={347} y={537} anchor="middle" size={7} weight={700} fill="#c02840">نقطة</Ar>
        <Ar x={347} y={543} anchor="middle" size={7} weight={700} fill="#c02840">التلاشي</Ar>
        <Ar x={537} y={537} anchor="middle" size={7} weight={700} fill="#c02840">نقطة</Ar>
        <Ar x={537} y={543} anchor="middle" size={7} weight={700} fill="#c02840">التلاشي</Ar>
        <Ar x={290} y={570} anchor="middle" size={11} weight={700} fill="#111">ر</Ar>
        <Ar x={366} y={568} anchor="middle" size={11} weight={700} fill="#111">ع</Ar>
        <Ar x={280} y={583} anchor="middle" size={11} weight={700} fill="#111">ص</Ar>
        <Ar x={377} y={585} anchor="middle" size={10} weight={700} fill="#111">س</Ar>
        <Ar x={605} y={587} anchor="middle" size={10} weight={700} fill="#111">س</Ar>

        {/* dimensions */}
        <path d="M399.500 582V596M399.500 611V622M512 254H598M509 258l7-8M594 258l7-8M619.500 260V277M619.500 296V380M619.500 398V497M619.500 517V576M619.500 593V622" stroke="#b03048" fill="none" />
        {[260, 311, 466, 546, 622].map((y) => <Tick key={y} x={619} y={y} />)}
        <Tick x={399} y={581} />
        <Tick x={399} y={622} />
        <Num x={399} y={607} size={12} weight={400} fill="#c01838" family={dimFont}>1.6</Num>
        <Num x={554} y={249} size={12} weight={400} fill="#c01838" family={dimFont}>4</Num>
        <Num x={619} y={291} size={12} weight={400} fill="#c01838" family={dimFont}>2</Num>
        <Num x={619} y={394} size={12} weight={400} fill="#c01838" family={dimFont}>6</Num>
        <Num x={619} y={511} size={12} weight={400} fill="#c01838" family={dimFont}>4</Num>
        <Num x={619} y={589} size={12} weight={400} fill="#c01838" family={dimFont}>3.2</Num>
        <Ar x={328} y={664} size={10} weight={700} fill="#111">خط الصــورة</Ar>

        {/* question text */}
        <rect x="1127" y="238" width="10" height="12" fill="#c08a4c" />
        <rect x="1127" y="238" width="4" height="12" fill="#e6ccaa" />
        <Ar x={1120} y={250} fill="#b37a30">و- منظور متوازي مستطيلات:</Ar>
        <Ar x={1126} y={276} size={10} fill="#222">الشكل المرفق يوضح طريقة رسم منظور بنقطة واحدة لمتوازي مستطيلات طوله (2) متر، وعرضة (1) متر، وارتفاعه</Ar>
        <Ar x={1138} y={303} size={10} fill="#222">(80) سم، علماً أن ارتفاع خط الأفق (160) سم، والجسم يقع خلف خط الصورة، ونقطة الوقوف تبعد عن خط الصورة</Ar>
        <Ar x={1138} y={330} size={10} fill="#222">(300) سم، وقياس الرسم 50:1.</Ar>

        {/* solution notes */}
        <Ar x={1128} y={362}>.استخراج معطيات السؤال</Ar>
        <path d="M974 370H1127M974 463H1127" stroke="#fff" strokeWidth="4" strokeLinecap="round" />
        <Ar x={1128} y={389} size={12} weight={700} fill="#8e0f20">أبعاد متوازي المستطيلات ــ الطول ٢ متر - العرض ١ متر - الارتفاع ٨٠ سم</Ar>
        <Ar x={1123} y={412}>مقياس الرسم ١ ــ ١٠٠</Ar>
        <Ar x={971} y={412} size={14}>ــ الطول ٢ سم - العرض ١ سم - الارتفاع ٠,٨ سم</Ar>
        <rect x="686" y="423" width="439" height="27" fill="none" stroke="#2ee62e" strokeWidth="3.500" />
        <Ar x={1120} y={439}>مقياس الرسم ١ ــ ٥٠</Ar>
        <Ar x={971} y={439} size={14}>ــ الطول ٤ سم - العرض ٢ سم - الارتفاع ١,٦ سم</Ar>
        <Ar x={1127} y={482}>الجسم يقع خلف خط الصورة</Ar>
        <Ar x={1127} y={508}>ارتفاع خط الأفق عن خط الأرض ١٦٠ سم</Ar>
        <Ar x={893} y={506}>-</Ar>
        <Ar x={873} y={508}>مقياس الرسم ١ ــ ١٠٠ .الارتفاع ١,٦ سم</Ar>
        <rect x="645.500" y="515.500" width="233" height="28" fill="none" stroke="#2ee62e" strokeWidth="3.500" />
        <Ar x={872} y={533}>مقياس الرسم ١ ــ ٥٠ .الارتفاع ٣,٢ سم</Ar>
        <Ar x={1132} y={574}>نقطة الوقوف ق تبعد عن خط الصورة ٣٠٠ سم</Ar>
        <Ar x={871} y={573}>-</Ar>
        <Ar x={861} y={571}>مقياس الرسم ١ ــ ١٠٠ .المسافة ٣ سم</Ar>
        <rect x="645.500" y="582" width="222" height="28" fill="none" stroke="#2ee62e" strokeWidth="3.500" />
        <Ar x={861} y={600}>مقياس الرسم ١ ــ ٥٠ .الارتفاع ٦ سم</Ar>
        <Ar x={1134} y={635} size={12} weight={700} fill="#8e0f20">المطلوب - رسم منظور بنقطة تلاشي واحدة لمتوازي المستطيلات</Ar>

        {/* crosshair */}
        <path d="M789 466.500H818M823 466.500H853M820.500 434V464M820.500 469V498" stroke="#b9bec4" />
        <circle cx="820.500" cy="466.500" r="2.500" fill="none" stroke="#d5d9dd" />
      </g>
    </svg>
  );
}

function ViewCube() {
  return (
    <div className="absolute right-2 top-2 w-[90px]">
      <svg width="90" height="98" viewBox="0 0 90 98" fontFamily='"Liberation Sans", sans-serif' fontWeight="700" fill="#ccd0d4" textAnchor="middle">
        <circle cx="46" cy="48" r="36.500" fill="none" stroke="#484e57" strokeWidth="8" />
        <rect x="28" y="31" width="36" height="35" fill="#bfc1c3" />
        <rect x="34" y="37" width="24" height="23" fill="#b0b2b4" />
        <text x="46" y="52" fontSize="8" fill="#3d434a">TOP</text>
        <text x="46" y="15" fontSize="14">N</text>
        <text x="46" y="92" fontSize="14">S</text>
        <text x="7" y="53" fontSize="14">W</text>
        <text x="85" y="53" fontSize="14">E</text>
      </svg>
      <button className="ml-[27px] mt-[10px] block h-[14px] w-[38px] rounded bg-[#a4a8b0] pl-[3px] text-left text-[9px] leading-[14px] text-[#5b6068]">WCS</button>
    </div>
  );
}

const navTools: { name: string; icon: ReactNode }[] = [
  { name: "Full navigation wheel", icon: <Ico w={20} h={24}><rect x="2" y="3" width="17" height="17" rx="6" stroke="#3f454b" /><circle cx="10" cy="12" r="5" stroke="#3f454b" /><circle cx="10" cy="12" r="2.500" stroke="#3f454b" /></Ico> },
  { name: "Pan", icon: <Ico w={20} h={24}><path d="M4 12 6 5l2 5 1-7 2 7 2-6 1 7 3-4-1 8c-1 5-8 6-10 3L2 14z" stroke="#3f454b" /></Ico> },
  { name: "Zoom extents", icon: <Ico w={20} h={24}><path d="M2 3l12 12M14 3 2 15M2 6V3h3M11 3h3v3M2 12v3h3" stroke="#3f454b" /><circle cx="15" cy="15" r="4" stroke="#3f454b" /><path d="M17 18l3 3" stroke="#3f454b" /></Ico> },
  { name: "Orbit", icon: <Ico w={20} h={24}><path d="M8 2h4v20H8zM6 5l4-4 4 4" stroke="#3f454b" /><ellipse cx="10" cy="12" rx="9" ry="3.500" stroke="#3f454b" /></Ico> },
  { name: "ShowMotion", icon: <Ico w={20} h={24}><path d="M2 8h12v12H2zM2 8V3h5v5M8 8V3h5v5M14 8V3h5v5z" stroke="#3f454b" /><path d="M6 11l5 3-5 3z" fill="#3f454b" stroke="none" /></Ico> },
];

function NavBar() {
  return (
    <nav aria-label="Navigation" className="absolute right-0 top-[150px] flex h-[172px] w-6 flex-col items-center justify-between rounded-l-sm border border-[#777c80] bg-[#5a6064] py-3">
      {navTools.map((t) => (
        <button key={t.name} aria-label={t.name}>{t.icon}</button>
      ))}
    </nav>
  );
}

/* ---------- status bar ---------- */

const g = (children: ReactNode) => <Ico>{children}</Ico>;

type Cell = { name: string; icon?: ReactNode; text?: string; on?: boolean; w: string };
const W5 = "w-5";
const WA = "w-[14px]";
const WB = "w-4";
const W6 = "w-[22px]";
const person = <path d="M8 2l-3 12 3-3 3 3z" fill="#e8eaec" stroke="#e8eaec" />;

const cells: Cell[] = [
  { name: "Coordinates", text: "2891.6914, 2248.2403, 0.0000", w: "w-[152px] pl-2" },
  { name: "Model", text: "MODEL", w: "w-[41px]" },
  { name: "Grid", icon: g(<path d="M5 1v14M8.500 1v14M12 1v14M1 4.500h14M1 8h14M1 11.500h14" />), w: W5 },
  { name: "Snap", icon: g(<path d="M2 3h12M2 8h12M2 13h12" strokeDasharray="2 3" strokeWidth="2" />), w: W5 },
  { name: "Snap menu", w: WB },
  { name: "Infer constraints", icon: g(<><path d="M8 2h6v6H8zM3 10h5v5H3z" fill="#dfe2e5" stroke="none" /><path d="M4.500 9V5H8" /></>), w: W5 },
  { name: "Dynamic input", icon: g(<><path d="M1 5h6M4 2v6" stroke="#fff" /><path d="M6 9h9v4H6z" fill="#fff" stroke="none" /></>), on: true, w: W5 },
  { name: "Ortho", icon: g(<path d="M3 2v11h11M3 9h4v4" stroke="#a9afb6" />), w: W5 },
  { name: "Polar tracking", icon: g(<><circle cx="7" cy="9" r="5" /><path d="M7 9h8M7 9l5-7" /></>), w: W5 },
  { name: "Polar menu", w: WB },
  { name: "Isometric", icon: g(<><path d="M8 2v12" stroke="#5fc26a" /><path d="M4 2l8 11" stroke="#9aa1a9" /></>), w: W5 },
  { name: "Isometric menu", w: "w-3" },
  { name: "Object snap tracking", icon: g(<path d="M2 13 13 3M2 13h12" />), w: W5 },
  { name: "Object snap", icon: g(<><rect x="3" y="4" width="10" height="10" stroke="#fff" /><path d="M1.500 2.500h3v3h-3z" fill="#fff" stroke="none" /></>), on: true, w: W5 },
  { name: "Object snap menu", w: WA },
  { name: "Lineweight", icon: g(<path d="M2 3h12M2 6.500h9M2 10h12M2 13.500h8" stroke="#fff" strokeWidth="2" />), on: true, w: W5 },
  { name: "Transparency", icon: g(<><rect x="2" y="2" width="12" height="12" stroke="#fff" /><path d="M2 4h12M2 8h12M2 12h12" stroke="#fff" strokeWidth="2" strokeDasharray="2 2" /><path d="M4 6h10M4 10h10" stroke="#fff" strokeWidth="2" strokeDasharray="2 2" /></>), on: true, w: W5 },
  { name: "Selection cycling", icon: g(<><path d="M2 2h8v8H2z" stroke="#fff" /><path d="M5 5h9v9H5z" fill="#fff" stroke="none" /></>), on: true, w: W5 },
  { name: "3D object snap", icon: g(<path d="M2 6h8v7H2zM2 6l4-4h8v7l-4 4M10 6l4-4" stroke="#fff" />), on: true, w: W5 },
  { name: "3D snap menu", w: WB },
  { name: "Dynamic UCS", icon: g(<path d="M4 2v10h10M2 4l2-2 2 2M12 10l2 2-2 2M8 6h3v3" />), w: W5 },
  { name: "Selection filter", icon: g(<path d="M3 5h7v9H3zM3 5l3-3h8v9l-4 3M10 5l4-3" stroke="#a9d0ee" />), w: W5 },
  { name: "Filter menu", w: WB },
  { name: "Gizmo", icon: g(<><path d="M8 2l6 10H2z" stroke="#fff" /><circle cx="8" cy="9" r="4" stroke="#fff" /></>), on: true, w: W5 },
  { name: "Gizmo menu", w: WA },
  { name: "Annotation visibility", icon: g(<>{person}<circle cx="12" cy="4" r="2" stroke="#fff" /></>), on: true, w: W5 },
  { name: "Auto scale", icon: g(<>{person}<path d="M12 2v4M10 4h4" stroke="#fff" /></>), w: W5 },
  { name: "Annotation scale", icon: g(person), w: W5 },
  { name: "Scale", text: "1:1 / 100%", w: "w-[48px]" },
  { name: "Scale menu", w: WA },
  { name: "Workspace", icon: gear, w: W5 },
  { name: "Workspace menu", w: WA },
  { name: "Annotation monitor", icon: g(<path d="M8 1v14M1 8h14" stroke="#fff" strokeWidth="1.500" />), w: W5 },
  { name: "Units icon", icon: g(<><path d="M6 2h5v12H6z" fill="#e8eaec" stroke="none" /><path d="M6 4.500h2M6 7h2M6 9.500h2M6 12h2" stroke="#222" /></>), w: W6 },
  { name: "Units", text: "Decimal", w: "w-11" },
  { name: "Units menu", w: WB },
  { name: "Quick properties", icon: g(<><rect x="3" y="1.500" width="10" height="13" /><path d="M5 4.500h6M5 7h6M5 9.500h6M5 12h6" strokeDasharray="2 1" /></>), w: W5 },
  { name: "Lock UI", icon: g(<><path d="M9 12H2V3h12v5M2 5.500h12" /><path d="M9 10h6v5H9z" fill="#fff" stroke="none" /><path d="M10.500 10V8h3v2" /></>), w: W6 },
  { name: "Lock menu", w: WA },
  { name: "Isolate objects", icon: g(<><path d="M2 2h4v4H2zM4 14l3-5 3 5z" /><circle cx="12" cy="6" r="2.500" /></>), w: W6 },
  { name: "Graphics performance", icon: g(<><circle cx="8" cy="8" r="6.500" stroke="#fff" fill="#86b3da" /><path d="M6 11l5-6" stroke="#fff" strokeWidth="1.500" /></>), on: true, w: W6 },
  { name: "Hardware", icon: g(<><circle cx="7" cy="6" r="5" fill="#3d7fc0" stroke="none" /><path d="M1 8h6v6H1z" fill="#f0b93c" stroke="none" /><path d="M6 10l3 4 6-8" stroke="#5fd05f" strokeWidth="2.500" /></>), w: "w-6" },
  { name: "Clean screen", icon: g(<><path d="M2 2.500h12v11H2z" /><path d="M4.500 8V5h3M11.500 8v3h-3" /></>), w: "w-6" },
  { name: "Customization", icon: g(<path d="M2 4h12M2 8h12M2 12h12" strokeWidth="1.500" />), w: "w-[15px]" },
];

function StatusBar() {
  return (
    <div className="flex h-5 justify-end">
      {cells.map((c) => (
        <button
          key={c.name}
          aria-label={c.text ? undefined : c.name}
          className={`flex shrink-0 items-center justify-center overflow-hidden whitespace-nowrap text-[10px] text-[#eceef0] ${c.w} ${c.on ? "border-x border-[#3b4450] bg-[#5f90bd]" : "bg-[#3b4450]"} ${c.name === "Model" ? "border-x border-[#2a313b]" : ""}`}
        >
          {c.text ?? c.icon ?? <Caret big />}
        </button>
      ))}
    </div>
  );
}

const layouts = ["Model", "Layout1", "Layout2"];

export default function App() {
  return (
    <div className="flex min-h-screen flex-col overflow-hidden bg-black pb-4 pl-[6px] pt-5 font-['Noto_Sans','DejaVu_Sans',sans-serif]">
      <header className="flex border-b border-[#3a424d] bg-[#222831]">
        <div className="flex w-[37px] shrink-0 justify-center pt-[3px]">{logo}</div>
        <div className="min-w-0 flex-1">
          <TitleRow />
          <div className="flex h-[18px] items-center pt-[3px] text-[10px] leading-[15px] text-[#c9cdd1]">
            <nav className="flex flex-1 gap-[15px] pl-[6px]">
              {menus.map((m) => <a key={m} href="#">{m}</a>)}
            </nav>
            <div className="flex gap-1">
              <button aria-label="Minimize drawing">{minimize}</button>
              <button aria-label="Restore drawing">{restore}</button>
              <button aria-label="Close drawing" className="-mr-1">{close}</button>
            </div>
          </div>
        </div>
      </header>
      <div className="flex h-4 items-stretch bg-[#222831] text-[10px] leading-4 text-[#c9cdd1]">
        {ribbonTabs.map((t, i) => (
          <button key={t} className={i === 0 ? "rounded-t-sm bg-[#3b4450] px-2 font-medium text-white" : "px-[7px]"}>{t}</button>
        ))}
        <button aria-label="Minimize ribbon" className="ml-[10px] flex items-center gap-1">
          <span className="flex h-[7px] w-[13px] items-center justify-center bg-[#eceef0]">
            <svg width="4" height="3" viewBox="0 0 4 3"><path d="M0 3h4L2 0z" fill="#222" /></svg>
          </span>
          <Caret />
        </button>
      </div>
      <Ribbon />

      <div className="flex h-6 items-end border-b-4 border-[#343c47] bg-[#222831] pl-4 text-[10px] leading-4 text-[#c9cdd1]">
        <button className="h-[17px] w-[104px] rounded-t-md bg-[#2d343f] pl-[9px] text-left">Start</button>
        <div className="flex h-[17px] w-[228px] items-center gap-[6px] rounded-t-lg bg-[#3b4450] px-2 text-[#eceef0]">
          <button dir="rtl" className="min-w-0 flex-1 whitespace-nowrap text-right">*رسم منظور متوازي مس...اشي واحدة ص 55-51</button>
          <button aria-label="Close tab"><Ico w={9} h={9}><path d="M1 1l7 7M8 1 1 8" /></Ico></button>
        </div>
        <button aria-label="New tab" className="ml-[6px] flex h-4 w-5 items-center justify-center rounded-t-md bg-[#2d343f]">
          <Ico w={9} h={9}><path d="M4.500 1v7M1 4.500h7" strokeWidth="1.500" /></Ico>
        </button>
      </div>

      <main className="relative min-h-[486px] flex-1 overflow-hidden bg-[#212830]">
        <div className="absolute inset-0"><Drawing /></div>
        <ViewCube />
        <NavBar />
      </main>

      <footer className="border-t border-[#3a424d] bg-[#222831]">
        <div className="flex h-[17px] gap-[2px] pl-[7px] text-[10px] text-[#c9cdd1]">
          {layouts.map((l, i) => (
            <button key={l} className={`h-[14px] w-[52px] rounded-b-md leading-[14px] ${i === 0 ? "bg-[#3b4450] font-bold text-white" : "bg-[#2d343f]"}`}>{l}</button>
          ))}
          <button aria-label="New layout" className="flex h-[14px] w-5 items-center justify-center rounded-b-md bg-[#2d343f]">
            <Ico w={8} h={8}><path d="M4 0v8M0 4h8" /></Ico>
          </button>
        </div>
        <StatusBar />
      </footer>
    </div>
  );
}
